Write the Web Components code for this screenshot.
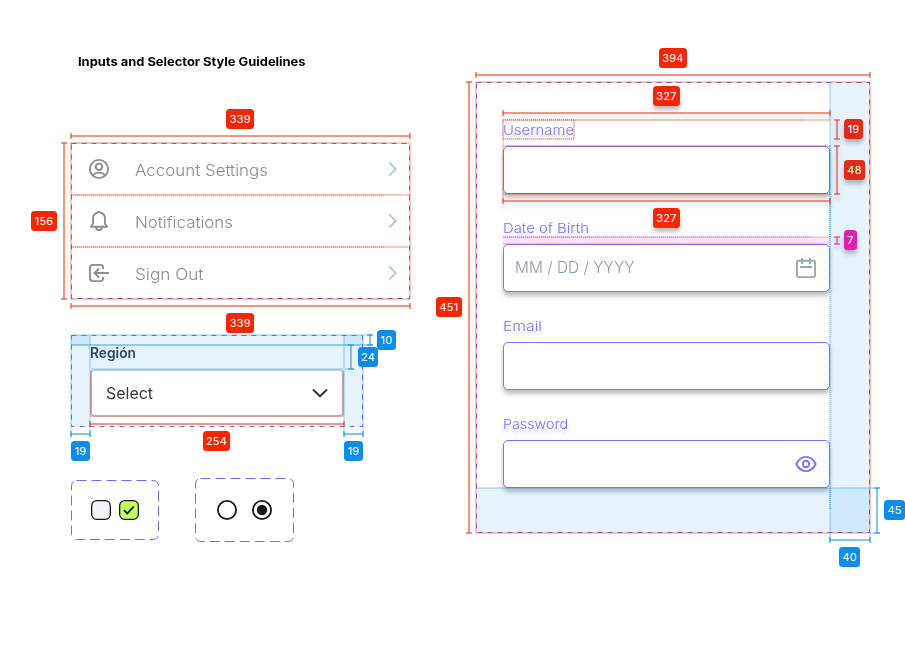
<!DOCTYPE html>
<html lang="en"><head><meta charset="utf-8"><title>Inputs and Selector Style Guidelines</title>
<style>html,body{margin:0;background:#fff;width:905px;height:659px;overflow:hidden;font-family:Inter,"Liberation Sans",sans-serif}</style></head>
<body><style-board></style-board>
<script>
const define=(name,html,after)=>customElements.define(name,class extends HTMLElement{
  connectedCallback(){
    if(this.shadowRoot)return;
    const t=document.createElement('template');
    t.innerHTML=typeof html==='function'?html(this):html;
    this.attachShadow({mode:'open'}).append(t.content.cloneNode(true));
    if(after)after(this);
  }
});

// Text whose glyphs are widened to a given advance width.
define('wide-text','<style>:host{display:block;white-space:nowrap}span{display:inline-block;transform-origin:0 50%}</style><span><slot></slot></span>',el=>{
  const s=el.shadowRoot.querySelector('span');
  const r=document.createRange();r.selectNodeContents(el);
  const w=r.getBoundingClientRect().width;
  if(w)s.style.transform=`scaleX(${+el.getAttribute('w')/w})`;
});

const glyphs={
  account:'<g fill="none" stroke="#8d8d8d" stroke-width="1.9"><circle cx="12" cy="12" r="9.1"/><circle cx="12" cy="9.8" r="3.2"/><path d="M5.600 18.300c1.700-1.800 3.800-2.700 6.400-2.700s4.700.9 6.400 2.700"/></g>',
  bell:'<g fill="none" stroke="#8d8d8d" stroke-width="1.900" stroke-linejoin="round" stroke-linecap="round"><path d="M3.900 17.800h16.200L18 14.700V9.500C18 6.300 15.800 4.200 13.300 3.500 13 2.600 11 2.600 10.700 3.500 8.200 4.200 6 6.300 6 9.500v5.200zM9 18.200c.2 1.900 1.300 3 3 3s2.800-1.100 3-3"/></g>',
  signout:'<g fill="none" stroke="#8d8d8d" stroke-width="1.900"><path d="M16 8V6.400C16 4.500 15.200 3.900 13.500 3.900H6C4.100 3.900 2.900 5 2.900 7v10c0 2 1.200 3.100 3.100 3.100h7.500c1.700 0 2.500-.6 2.500-2.500V16M22 12H7.500M12 7.500 7.500 12l4.500 4.500"/></g>',
  right:'<path d="M8.200 5.400 14.700 12l-6.500 6.600" fill="none" stroke="#a9cbe0" stroke-width="1.800"/>',
  down:'<path d="M5.500 9 12 15.200l6.500-6.200" fill="none" stroke="#2d3748" stroke-width="2" stroke-linecap="round" stroke-linejoin="round"/>',
  calendar:'<g fill="none" stroke="#9aa5b8" stroke-width="1.900"><rect x="2.900" y="4.800" width="18.200" height="16.300" rx="1.500"/><path d="M8 2v6M16 2v6M6 11h12"/></g>',
  eye:'<g fill="none" stroke="#7b74ff" stroke-width="1.900"><path d="M2.300 12C4.600 7.100 8 4.900 12 4.900s7.400 2.200 9.700 7.100c-2.300 4.900-5.700 7.100-9.700 7.100S4.600 16.900 2.300 12z"/><circle cx="12" cy="12" r="3.200"/></g>'
};
define('ui-icon',el=>`<style>:host{display:block;width:24px;height:24px;flex:none}svg{display:block}</style><svg width="24" height="24" viewBox="0 0 24 24">${glyphs[el.getAttribute('name')]}</svg>`);

// Dashed component-set frame drawn around slotted content.
define('dash-frame',el=>{
  const w=+el.getAttribute('w'),h=+el.getAttribute('h'),d=el.getAttribute('dash')||'5 5',r=el.getAttribute('r')||0;
  return `<style>:host{display:block;position:relative;box-sizing:border-box;width:${w}px;height:${h}px}svg{position:absolute;left:0;top:0;pointer-events:none;overflow:visible}</style><slot></slot><svg width="${w}" height="${h}"><rect x=".5" y=".5" width="${w-1}" height="${h-1}" rx="${r}" fill="none" stroke="#7069ff" stroke-dasharray="${d}"/></svg>`;
});

define('menu-row',el=>`<style>:host{display:flex;align-items:center;height:52px;box-sizing:border-box;padding:0 5px 0 16px;color:#8c8c8c;font-size:16px;font-weight:300}wide-text{margin:2px auto 0 24px}</style>
<ui-icon name="${el.getAttribute('icon')}"></ui-icon><wide-text w="${el.getAttribute('w')}">${el.getAttribute('label')}</wide-text><ui-icon name="right"></ui-icon>`);

define('form-field',el=>`<style>:host{display:block;width:327px;height:98px}
wide-text{height:19px;line-height:20px;margin-bottom:7px;font-size:13.500px;font-weight:300;color:#7b74ff;text-shadow:0 4px 4px rgba(0,0,0,.22)}
div{box-sizing:border-box;height:48px;border:1px solid #7b74ff;border-radius:5px;background:#fff;box-shadow:0 4px 4px rgba(0,0,0,.25);display:flex;align-items:center;justify-content:space-between;padding:0 11px}
div wide-text{font-size:16px;font-weight:300;color:#8c99af;text-shadow:none;margin:0;line-height:17px}ui-icon{margin-left:auto}</style>
<wide-text w="${el.getAttribute('w')}">${el.getAttribute('label')}</wide-text><div>${el.hasAttribute('hint')?`<wide-text w="119.500">${el.getAttribute('hint')}</wide-text>`:''}${el.hasAttribute('icon')?`<ui-icon name="${el.getAttribute('icon')}"></ui-icon>`:''}</div>`);

define('select-box',`<style>:host{display:block;padding:10px 19px 0}label{display:block;height:25px;line-height:15px;font-size:14px;font-weight:600;color:#2d435e}
div{box-sizing:border-box;height:48px;width:254px;margin-top:-1px;border:2px solid #c3cddf;border-radius:5px;background:#fff;display:flex;align-items:center;justify-content:space-between;padding:0 10px 0 14px;font-size:16px;color:#2d3748}</style>
<label><wide-text w="46">Región</wide-text></label><div><wide-text w="47">Select</wide-text><ui-icon name="down"></ui-icon></div>`);

define('check-pair',`<style>:host{display:block;padding:20px 0 0 20px}svg{display:block}</style><svg width="48" height="20"><g stroke="#15191c" stroke-width="1.300"><rect x=".65" y=".65" width="18.700" height="18.700" rx="5" fill="#f1f3fa"/><rect x="28.650" y=".65" width="18.700" height="18.700" rx="5" fill="#c4ff61"/></g><path d="M33 10.200l3.300 3.300 6.500-7" fill="none" stroke="#15191c" stroke-width="1.800"/></svg>`);
define('radio-pair',`<style>:host{display:block;padding:22px 0 0 22px}svg{display:block}</style><svg width="56" height="20"><g fill="none" stroke="#15191c" stroke-width="1.800"><circle cx="10" cy="10" r="9.100"/><circle cx="45" cy="10" r="9.100"/></g><circle cx="45" cy="10" r="5.200" fill="#15191c"/></svg>`);

define('measure-tag',el=>{
  const [x,y,w]=el.getAttribute('at').split(' ');
  return `<style>:host{position:absolute;left:${x}px;top:${y}px;width:${w}px;height:20px;line-height:20px;border-radius:3.500px;background:${el.getAttribute('c')||'#f72500'};color:#fff;font-size:11px;letter-spacing:.2px;text-align:center;${el.hasAttribute('lift')?'box-shadow:0 4px 4px rgba(0,0,0,.25)':''}}</style><slot></slot>`;
});

const bracket=(x1,y1,x2,y2,c)=>{
  const h=y1===y2;
  const ticks=h?`M${x1} ${y1-3}v6M${x2} ${y1-3}v6`:`M${x1-3} ${y1}h6M${x1-3} ${y2}h6`;
  return `<g stroke="${c}" stroke-opacity=".5" stroke-width="2" fill="none"><path d="M${x1} ${y1}L${x2} ${y2}"/><path d="${ticks}"/></g>`;
};
const R='#f72500',B='#0d8ce9',P='#dd20b5',D='#d8301c';
const pale=(d,c=R,o=.26)=>`<path d="${d}" stroke="${c}" stroke-opacity="${o}" stroke-width="2" fill="none"/>`;
const dots=(d,c=R,o=.25)=>`<path d="${d}" stroke="${c}" stroke-opacity="${o}" stroke-width="2" stroke-dasharray="1 1" fill="none"/>`;
const blue=(x,y,w,h)=>`<rect x="${x}" y="${y}" width="${w}" height="${h}" fill="${B}" fill-opacity=".1"/>`;

define('measure-layer',`<style>:host{position:absolute;inset:0;pointer-events:none}svg{position:absolute;left:0;top:0}.lift{filter:drop-shadow(0 4px 2px rgba(0,0,0,.25))}</style>
<svg width="905" height="659">
${pale('M71 143H410V299H71Z')}${pale('M71 195H410M71 247H410')}${dots('M71 143H385M71 299H400',R,.15)}${dots('M71 195H385M71 247H385')}
${bracket(71,136,410,136,R)}${bracket(71,306,410,306,R)}${bracket(64,143,64,299,R)}
${blue(71,335,292,10)}${blue(90,345,254,24)}${blue(71,335,19,92)}${blue(344,335,19,92)}
${pale('M71 335H373M90 369H354M71 427V437M90 335V437M344 335V437M363 335V437M71 335V427',B,.22)}${pale('M71 345H373',B,.4)}
${pale('M91 370V416H343V370',R,.26)}
${bracket(71,434,90,434,B)}${bracket(344,434,363,434,B)}${bracket(370,335,370,345,B)}${bracket(351,345,351,369,B)}${bracket(90,424,344,424,R)}
${blue(830,82,40,451)}${blue(476,488,394,45)}
${pale('M830 82V240M476 488H880M830 488V543M870 533V543M870 533H880',B,.22)}${dots('M830 146V510',B,.4)}
${pale('M476 82H870V533H476Z')}${dots('M476 100V470M870 100V500',R,.12)}
${bracket(476,75,870,75,R)}${bracket(469,82,469,533,R)}${bracket(877,488,877,533,B)}${bracket(830,540,870,540,B)}
<rect x="503" y="237" width="327" height="7" fill="${P}" fill-opacity=".12"/>${pale('M503 237H830M503 244H830',P,.2)}${dots('M503 237H810',P,.3)}
${pale('M503 120H830M503 146H830M503 194H830M503 120V201',R,.2)}${dots('M503 120H805M503 146H830M503 194H830',R,.2)}${dots('M503 120H574V139H503Z')}${pale('M503 139H574V120',R,.15)}
<g class="lift">${bracket(503,113,830,113,R)}${bracket(503,201,830,201,R)}${bracket(837,120,837,139,D)}${bracket(837,146,837,194,D)}${bracket(837,237,837,244,P)}</g>
</svg>
<measure-tag at="226.300 109 28">339</measure-tag><measure-tag at="226.300 313 28">339</measure-tag><measure-tag at="31 211 26">156</measure-tag>
<measure-tag at="203 431 27">254</measure-tag><measure-tag at="71 441 19" c="${B}">19</measure-tag><measure-tag at="344 441 19" c="${B}">19</measure-tag>
<measure-tag at="377 330 19" c="${B}">10</measure-tag><measure-tag at="358 347 20" c="${B}">24</measure-tag>
<measure-tag at="659 48 28">394</measure-tag><measure-tag at="436 297.400 26">451</measure-tag>
<measure-tag at="653 86 27" lift>327</measure-tag><measure-tag at="653 208 27" lift>327</measure-tag>
<measure-tag at="844 119.400 19" c="#dd2c18" lift>19</measure-tag><measure-tag at="844 160 21" c="#dd2c18" lift>48</measure-tag><measure-tag at="844 230.400 13" c="${P}" lift>7</measure-tag>
<measure-tag at="884 500.400 21" c="${B}">45</measure-tag><measure-tag at="839.300 547 21" c="${B}">40</measure-tag>`);

define('style-board',`<style>:host{display:grid;grid-template-columns:339px 394px;column-gap:66px;box-sizing:border-box;width:905px;height:659px;padding:52px 0 0 71px;position:relative}
h1{font-size:12px;line-height:20px;font-weight:700;color:#000;margin:0 0 71px 7px;height:20px}.list{margin-bottom:36px}.sel{margin-bottom:51px}.pairs{display:flex;gap:36px;align-items:center}.form{margin-top:30px;padding:38px 0 0 27px}</style>
<section><h1><wide-text w="227.500">Inputs and Selector Style Guidelines</wide-text></h1>
<dash-frame class="list" w="339" h="156"><menu-row icon="account" label="Account Settings" w="133"></menu-row><menu-row icon="bell" label="Notifications" w="98"></menu-row><menu-row icon="signout" label="Sign Out" w="68.500"></menu-row></dash-frame>
<dash-frame class="sel" w="292" h="92"><select-box></select-box></dash-frame>
<div class="pairs"><dash-frame w="88" h="60" r="5" dash="10 5"><check-pair></check-pair></dash-frame><dash-frame w="99" h="64" r="5" dash="10 5"><radio-pair></radio-pair></dash-frame></div></section>
<dash-frame class="form" w="394" h="451"><form-field label="Username" w="71"></form-field><form-field label="Date of Birth" w="86" hint="MM / DD / YYYY" icon="calendar"></form-field><form-field label="Email" w="39"></form-field><form-field label="Password" w="65" icon="eye"></form-field></dash-frame>
<measure-layer></measure-layer>`);
</script></body></html>
